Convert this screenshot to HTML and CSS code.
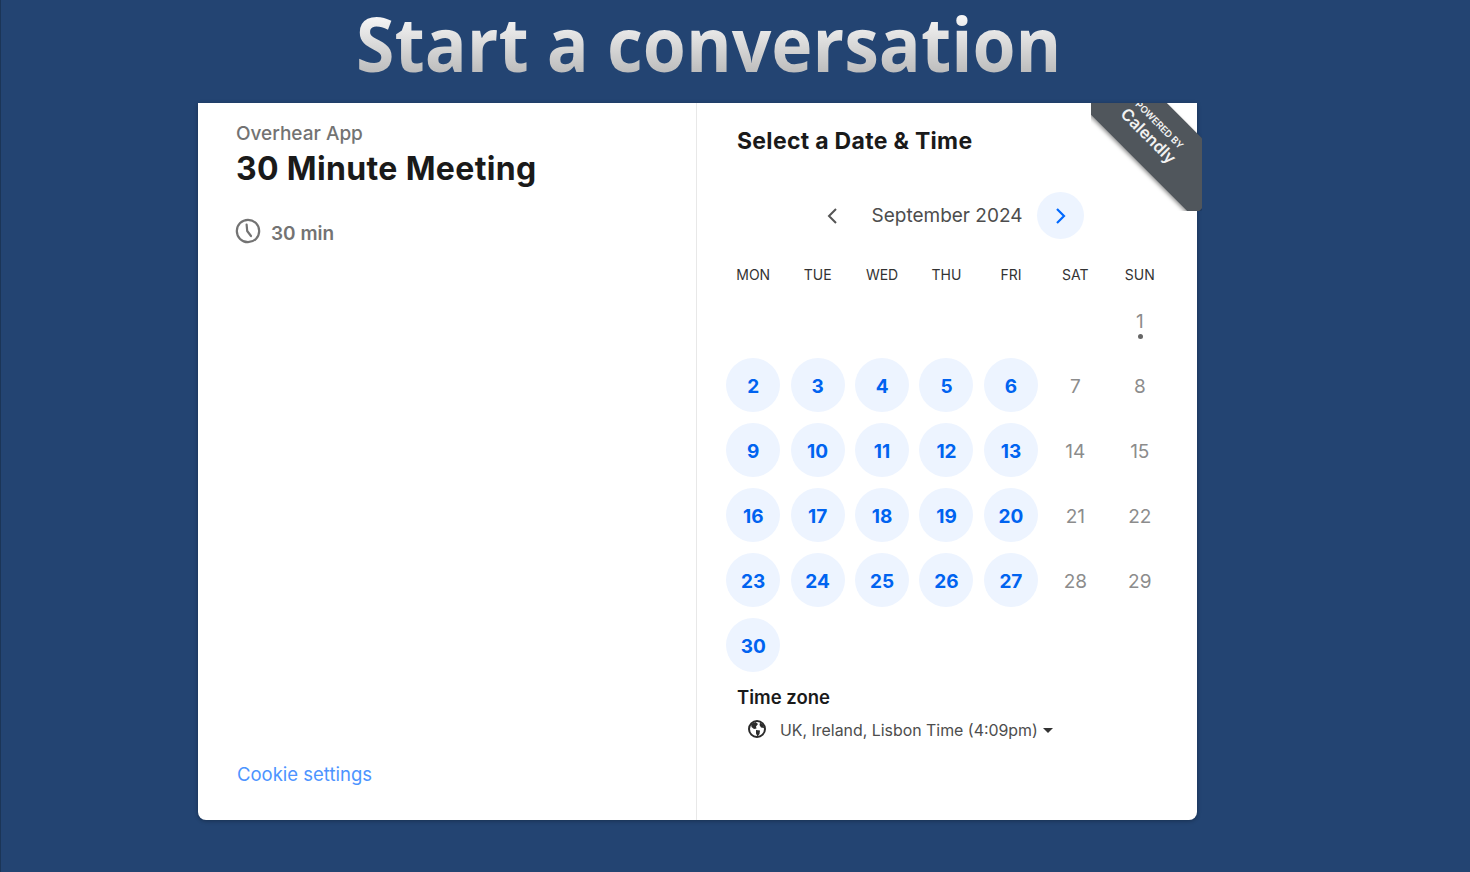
FILE: index.html
```html
<!DOCTYPE html>
<html lang="en">
<head>
<meta charset="utf-8">
<title>Start a conversation</title>
<link rel="stylesheet" href="styles.css">
</head>
<body>
<main class="page">
  <h1 class="headline">Start a conversation</h1>
  <section class="card">
    <div class="details">
      <div class="details-top">
        <div class="owner">Overhear App</div>
        <div class="event">30 Minute Meeting</div>
        <div class="duration">
          <svg class="clock" viewBox="0 0 26 26" width="26" height="26"><circle cx="13" cy="13" r="11.2" fill="none" stroke="#737373" stroke-width="2.2"/><path d="M11.6 6.5 L12.2 13 L16 18" fill="none" stroke="#737373" stroke-width="2.2" stroke-linecap="round" stroke-linejoin="round"/></svg>
          <span class="duration-text">30 min</span>
        </div>
      </div>
      <a class="cookie">Cookie settings</a>
    </div>
    <div class="picker">
      <h2 class="picker-title">Select a Date &amp; Time</h2>
      <div class="month-nav">
        <span class="nav-btn"><svg viewBox="0 0 14 18" width="14" height="18"><path d="M11 2 L4 9 L11 16" fill="none" stroke="#555" stroke-width="2"/></svg></span>
        <span class="month">September 2024</span>
        <span class="nav-btn nav-active"><svg viewBox="0 0 14 18" width="14" height="18"><path d="M3 2 L10 9 L3 16" fill="none" stroke="#0069ff" stroke-width="2.2"/></svg></span>
      </div>
      <div class="weekdays">
        <span>MON</span><span>TUE</span><span>WED</span><span>THU</span><span>FRI</span><span>SAT</span><span>SUN</span>
      </div>
      <div class="days">
        <span class="day off start-sun today">1</span>
        <span class="day on">2</span><span class="day on">3</span><span class="day on">4</span><span class="day on">5</span><span class="day on">6</span><span class="day off">7</span><span class="day off">8</span>
        <span class="day on">9</span><span class="day on">10</span><span class="day on">11</span><span class="day on">12</span><span class="day on">13</span><span class="day off">14</span><span class="day off">15</span>
        <span class="day on">16</span><span class="day on">17</span><span class="day on">18</span><span class="day on">19</span><span class="day on">20</span><span class="day off">21</span><span class="day off">22</span>
        <span class="day on">23</span><span class="day on">24</span><span class="day on">25</span><span class="day on">26</span><span class="day on">27</span><span class="day off">28</span><span class="day off">29</span>
        <span class="day on">30</span>
      </div>
      <div class="zone">
        <div class="zone-label">Time zone</div>
        <div class="zone-value">
          <svg class="globe" viewBox="0 0 20 20" width="20" height="20"><circle cx="10" cy="10" r="8" fill="none" stroke="#2b2b2b" stroke-width="2"/><path d="M4 5 L8.5 3 L11 5 L9 7.5 L9.5 9.5 L7 10 L4.5 8 Z M9 11 L13 11.5 L12.5 15 L10.5 17.5 L9 14.5 Z M13 3.5 L16.5 6 L17 9 L14 8.5 L12.5 6 Z" fill="#2b2b2b"/></svg>
          <span>UK, Ireland, Lisbon Time (4:09pm)</span>
          <i class="caret"></i>
        </div>
      </div>
    </div>
    <div class="ribbon">
      <div class="ribbon-band">
        <span class="ribbon-small">POWERED BY</span>
        <span class="ribbon-brand">Calendly</span>
      </div>
    </div>
  </section>
</main>
</body>
</html>
```
FILE: styles.css
```css
* { box-sizing: border-box; }
html, body { margin: 0; height: 100%; }
body {
  background: #234472;
  border-left: 1px solid #1b3557;
  font-family: "Inter", "Liberation Sans", sans-serif;
  overflow: hidden;
}
.page { height: 872px; display: flex; flex-direction: column; align-items: flex-start; }
.headline {
  margin: 0 0 0 355px;
  width: max-content;
  height: 103px;
  font-family: "Open Sans", sans-serif;
  font-weight: 700;
  font-size: 76px;
  line-height: 86px;
  white-space: nowrap;
  transform: scaleX(.917);
  transform-origin: left top;
  background: linear-gradient(180deg, #f6f6f6 16%, #bdbdbd 70%);
  -webkit-background-clip: text;
  background-clip: text;
  color: transparent;
}
.card {
  position: relative;
  margin-left: 197px;
  width: 999px;
  height: 717px;
  background: #fff;
  border-radius: 0 0 8px 8px;
  display: flex;
  box-shadow: 0 1px 4px rgba(0,0,0,.3);
}
.details {
  width: 499px;
  border-right: 1px solid #e8e8e8;
  padding: 20px 38px 34px;
  display: flex;
  flex-direction: column;
  justify-content: space-between;
}
.owner { font-size: 19px; font-weight: 500; line-height: 22px; color: #737373; }
.event { margin-top: 4px; font-size: 32px; font-weight: 700; letter-spacing: .35px; line-height: 40px; color: #1a1a1a; }
.duration { margin-top: 27px; display: flex; align-items: center; gap: 10px; font-size: 19px; font-weight: 600; color: #737373; }
.duration-text { margin-top: 6px; }
.clock { flex: none; margin-left: -1px; }
.cookie { margin-left: 1px; font-size: 18.5px; line-height: 24px; color: #4d94ff; }
.picker { flex: 1; padding: 25px 0 0 24px; }
.picker-title { margin: 0 0 0 16px; font-size: 23px; font-weight: 700; letter-spacing: .3px; line-height: 26px; color: #1a1a1a; }
.month-nav { margin-top: 38px; padding-left: 87px; height: 47px; display: flex; align-items: center; }
.nav-btn { width: 47px; height: 47px; border-radius: 50%; display: flex; align-items: center; justify-content: center; flex: none; }
.nav-active { background: #edf4ff; }
.month { width: 182px; padding-left: 2px; text-align: center; font-size: 19px; color: #4d4d4d; }
.weekdays { margin-top: 26px; width: 451px; display: grid; grid-template-columns: repeat(7, 1fr); justify-items: center; font-size: 14px; line-height: 20px; color: #333; }
.days { margin-top: 2px; width: 451px; display: grid; grid-template-columns: repeat(7, 1fr); grid-auto-rows: 65px; justify-items: center; align-items: center; }
.day { position: relative; width: 54px; height: 54px; border-radius: 50%; display: flex; align-items: center; justify-content: center; font-size: 19px; padding-top: 3px; }
.on { background: #edf4ff; color: #0063f0; font-weight: 700; }
.off { color: #8c8c8c; }
.start-sun { grid-column: 7; padding-top: 4px; }
.today::after { content: ""; position: absolute; left: 25px; top: 41px; width: 5px; height: 5px; border-radius: 50%; background: #666; }
.zone { margin: 8px 0 0 16px; }
.zone-label { font-size: 18.5px; font-weight: 600; line-height: 24px; color: #1a1a1a; }
.zone-value { margin-top: 10px; margin-left: 10px; display: flex; align-items: center; font-size: 15.9px; line-height: 24px; color: #4d4d4d; }
.globe { flex: none; margin-right: 13px; margin-top: -4px; }
.caret { margin-left: 5px; margin-top: -2px; border: 5px solid transparent; border-top-color: #333; border-bottom-width: 0; }
.ribbon { position: absolute; top: 0; right: -5px; width: 111px; height: 108px; overflow: hidden; }
.ribbon-band {
  position: absolute;
  left: -21px; top: 1px;
  width: 170px; height: 62px;
  padding: 0 8px 2px 0;
  transform: rotate(45deg);
  background: #50565c;
  box-shadow: 0 2px 4px rgba(0,0,0,.4);
  color: #f2f2f2;
  display: flex; flex-direction: column; align-items: center; justify-content: center;
}
.ribbon-small { font-size: 9.5px; font-weight: 600; line-height: 11px; }
.ribbon-brand { font-size: 16.5px; font-weight: 600; line-height: 20px; }
```
